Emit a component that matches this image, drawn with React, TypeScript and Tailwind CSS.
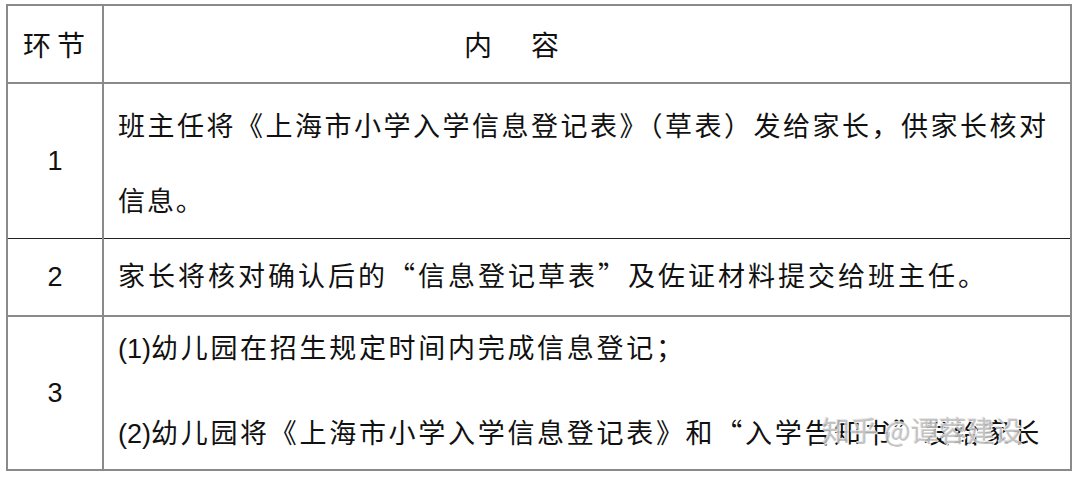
import React from "react";

const cjk = "font-['Noto_Sans_CJK_SC',sans-serif]";
const latin = "font-['Liberation_Sans',sans-serif]";

const App = () => {
  return (
    <div
      lang="zh-CN"
      className={`relative w-[1080px] h-[477px] bg-white text-[#111] ${cjk} pt-[4px] pl-[6px]`}
    >
      <table className="w-[1066px] border-collapse table-fixed">
        <tbody>
          <tr className="h-[78px]">
            <td className="w-[96px] border-2 border-[#8a8a8a] align-middle text-center text-[28px] tracking-[6px] pl-[4px]">
              环节
            </td>
            <td className="border-2 border-[#8a8a8a] align-middle text-[28px] pl-[360px]">
              内<span className="ml-[39px]">容</span>
            </td>
          </tr>
          <tr className="h-[155px]">
            <td className={`border-2 border-b border-[#8a8a8a] border-b-[#222] align-middle text-center text-[27px] ${latin}`}>
              1
            </td>
            <td className="border-2 border-b border-[#8a8a8a] border-b-[#222] align-top pt-[3px] pl-[14px] pr-[22px] text-[27px] leading-[75px] tracking-[1.9px] text-justify">
              班主任将《上海市小学入学信息登记表》（草表）发给家长，供家长核对信息。
            </td>
          </tr>
          <tr className="h-[78px]">
            <td className={`border-2 border-[#8a8a8a] border-t-[#222] border-t align-middle text-center text-[27px] ${latin}`}>
              2
            </td>
            <td className="border-2 border-[#8a8a8a] border-t-[#222] border-t align-top pl-[14px] text-[27px] leading-[72px] tracking-[3px] whitespace-nowrap">
              家长将核对确认后的“信息登记草表”及佐证材料提交给班主任。
            </td>
          </tr>
          <tr className="h-[154px]">
            <td className={`border-2 border-[#8a8a8a] align-middle text-center text-[27px] ${latin}`}>
              3
            </td>
            <td className="border-2 border-[#8a8a8a] align-top pl-[14px] text-[27px] leading-[60px] tracking-[2.7px] whitespace-nowrap">
              <div>
                <span className={`${latin} tracking-normal`}>(1)</span>
                幼儿园在招生规定时间内完成信息登记；
              </div>
              <div className="mt-[23px]">
                <span className={`${latin} tracking-normal`}>(2)</span>
                幼儿园将《上海市小学入学信息登记表》和“入学告知书”发给家长
              </div>
            </td>
          </tr>
        </tbody>
      </table>

      {/* watermark */}
      <div className="pointer-events-none absolute left-[822px] top-[410px] text-[28px] leading-[40px] text-[#bdbdbd] opacity-90 whitespace-nowrap [text-shadow:1px_1px_0_#ffffff,-1px_-1px_0_#e5e5e5]">
        知乎 @谭蓉建设
      </div>
    </div>
  );
};

export default App;
